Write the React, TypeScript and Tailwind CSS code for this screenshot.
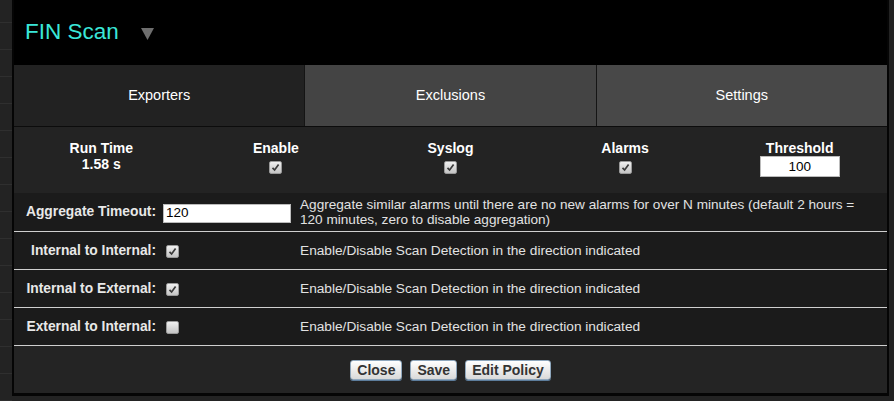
import { useState } from 'react';

const font = { fontFamily: '"Liberation Sans", Arial, sans-serif' };

function Check({ checked }: { checked: boolean }) {
  return (
    <span className="inline-flex h-[13px] w-[13px] items-center justify-center rounded-[2px] border border-[#9a9a9a] bg-gradient-to-b from-[#f0f0f0] to-[#c4c4c4]">
      {checked && (
        <svg width="9" height="9" viewBox="0 0 9 9">
          <path d="M1.5 4.8 L3.6 7 L7.6 1.6" fill="none" stroke="#3a3a3a" strokeWidth="1.7" />
        </svg>
      )}
    </span>
  );
}

function Btn({ children }: { children: string }) {
  return (
    <button className="h-[20px] rounded-[3px] border border-[#8fa7bd] bg-gradient-to-b from-[#ffffff] to-[#d9d9d9] px-[6px] text-[14px] font-bold leading-none text-[#333] shadow-[0_1px_0_#5d7d9c]">
      {children}
    </button>
  );
}

const rows = [
  { label: 'Internal to Internal:', checked: true },
  { label: 'Internal to External:', checked: true },
  { label: 'External to Internal:', checked: false },
];

export default function App() {
  const [tab] = useState('Exporters');
  const tabs = ['Exporters', 'Exclusions', 'Settings'];

  return (
    <div style={font} className="flex h-[401px] w-[894px] overflow-hidden bg-[#232323]">
      {/* page behind the dialog */}
      <div className="flex w-[12px] shrink-0 flex-col">
        {Array.from({ length: 15 }).map((_, i) => (
          <div key={i} className={'border-b border-[#2f2f2f] ' + (i === 0 ? 'h-[23px]' : 'h-[27.5px]')} />
        ))}
      </div>

      <div className="h-fit w-[877px] shrink-0 border-x-2 border-b-[3px] border-[#050505] bg-[#232323]">
        {/* header */}
        <div className="flex h-[65px] items-center bg-black pl-[11px]">
          <span className="text-[22.5px] leading-none text-[#3ae6d8]">FIN Scan</span>
          <svg className="ml-[22px] mt-[2px]" width="13" height="12" viewBox="0 0 13 12">
            <path d="M0 0 H13 L6.5 12 Z" fill="#6e6e6e" />
          </svg>
        </div>

        {/* tabs */}
        <div className="flex h-[62px] border-b border-[#0c0c0c]">
          {tabs.map((t, i) => (
            <div
              key={t}
              className={
                'flex flex-1 items-center justify-center text-[14.5px] text-white ' +
                (t === tab ? 'bg-[#222222] ' : i === 1 ? 'bg-[#444444] ' : 'bg-[#484848] ') +
                (i > 0 ? 'border-l border-[#151515]' : '')
              }
            >
              {t}
            </div>
          ))}
        </div>

        {/* stats */}
        <div className="grid h-[66px] grid-cols-5 bg-[#232323] pt-[13px] text-[14px] font-bold leading-[16px] text-white">
          <div className="flex flex-col items-center">
            <span>Run Time</span>
            <span>1.58 s</span>
          </div>
          {['Enable', 'Syslog', 'Alarms'].map((l) => (
            <div key={l} className="flex flex-col items-center">
              <span>{l}</span>
              <span className="mt-[3px]">
                <Check checked />
              </span>
            </div>
          ))}
          <div className="flex flex-col items-center">
            <span>Threshold</span>
            <input
              readOnly
              value="100"
              className="h-[21px] w-[80px] border border-[#bbb] bg-white text-center text-[13.5px] font-normal text-black outline-none"
            />
          </div>
        </div>

        {/* aggregate */}
        <div className="flex h-[39px] items-center border-b border-[#cfcfcf] bg-[#1b1b1b]">
          <span className="w-[142px] text-right text-[13.8px] font-bold text-[#e8e8e8]">Aggregate Timeout:</span>
          <span className="ml-[7px] w-[137px]">
            <input
              readOnly
              value="120"
              className="h-[19px] w-[128px] border border-[#bbb] bg-white px-[2px] text-[13.5px] text-black outline-none"
            />
          </span>
          <span className="flex-1 text-[13.6px] leading-[15px] text-[#e2e2e2]">
            Aggregate similar alarms until there are no new alarms for over N minutes (default 2 hours =<br />
            120 minutes, zero to disable aggregation)
          </span>
        </div>

        {rows.map((r) => (
          <div key={r.label} className="flex h-[38px] items-center border-b border-[#cfcfcf] bg-[#1b1b1b] pt-[2px]">
            <span className="w-[142px] text-right text-[13.8px] font-bold text-[#e8e8e8]">{r.label}</span>
            <span className="ml-[7px] flex w-[137px] pl-[3px]">
              <Check checked={r.checked} />
            </span>
            <span className="flex-1 text-[13.7px] text-[#e2e2e2]">
              Enable/Disable Scan Detection in the direction indicated
            </span>
          </div>
        ))}

        {/* footer */}
        <div className="flex h-[47px] items-center justify-center gap-[8px] bg-[#242424] pt-[1px]">
          <Btn>Close</Btn>
          <Btn>Save</Btn>
          <Btn>Edit Policy</Btn>
        </div>
      </div>
    </div>
  );
}
